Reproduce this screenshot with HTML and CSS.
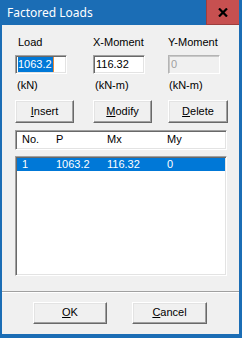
FILE: index.html
```html
<!DOCTYPE html>
<html lang="en">
<head>
    <meta charset="UTF-8">
    <title>Factored Loads</title>
    <link rel="stylesheet" href="styles.css">
</head>
<body>
    <div class="window">
        <div class="titlebar">
            <span class="title">Factored Loads</span>
            <span class="close-btn">
                <svg width="10" height="9" viewBox="0 0 10 9">
                    <path d="M1 0.5 L9 8.5 M9 0.5 L1 8.5" stroke="#000" stroke-width="2.2"/>
                </svg>
            </span>
        </div>
        <div class="client">
            <div class="fields">
                <div class="row labels">
                    <span class="label first">Load</span>
                    <span class="label">X-Moment</span>
                    <span class="label">Y-Moment</span>
                </div>
                <div class="row inputs">
                    <div class="field"><span class="selected">1063.2</span></div>
                    <div class="field">116.32</div>
                    <div class="field disabled">0</div>
                </div>
                <div class="row units">
                    <span class="unit">(kN)</span>
                    <span class="unit">(kN-m)</span>
                    <span class="unit last">(kN-m)</span>
                </div>
                <div class="row actions">
                    <div class="btn w59"><u>I</u>nsert</div>
                    <div class="btn w59"><u>M</u>odify</div>
                    <div class="btn w60"><u>D</u>elete</div>
                </div>
            </div>

            <div class="table-head">
                <div class="cols">
                    <span>No.</span>
                    <span>P</span>
                    <span>Mx</span>
                    <span>My</span>
                </div>
            </div>

            <div class="listbox">
                <div class="cols item active">
                    <span>1</span>
                    <span>1063.2</span>
                    <span>116.32</span>
                    <span>0</span>
                </div>
            </div>

            <div class="separator"></div>

            <div class="footer">
                <div class="btn ok"><u>O</u>K</div>
                <div class="btn cancel"><u>C</u>ancel</div>
            </div>
        </div>
    </div>
</body>
</html>
```

FILE: styles.css
```css
body {
    margin: 0;
    padding: 0;
    font-family: "Liberation Sans", Arial, sans-serif;
    font-size: 11px;
    color: #000;
}

.window {
    width: 242px;
    height: 338px;
    background-color: #1b6db5;
    display: flex;
    flex-direction: column;
}

.titlebar {
    height: 25px;
    display: flex;
    align-items: stretch;
    padding-right: 3px;
}

.title {
    font-family: "Noto Sans", sans-serif;
    font-size: 12px;
    color: #fff;
    padding-left: 7px;
    line-height: 25px;
    flex: 1;
}

.close-btn {
    width: 32px;
    background-color: #c75050;
    border-left: 1px solid #9c3e3e;
    border-bottom: 1px solid #9c3e3e;
    display: flex;
    align-items: center;
    justify-content: center;
}

.client {
    flex: 1;
    margin: 0 3px 4px 2px;
    background-color: #f0f0f0;
    display: flex;
    flex-direction: column;
}

.fields {
    padding: 11px 0 0 13px;
}

.row {
    display: grid;
    grid-template-columns: 78px 75px 60px;
}

.label {
    line-height: 13px;
    height: 13px;
}

.label.first {
    padding-left: 3px;
}

.inputs {
    margin-top: 6px;
}

.field {
    box-sizing: border-box;
    width: 52px;
    height: 19px;
    background: #fff;
    border: 1px solid;
    border-color: #a0a0a0 #fff #fff #a0a0a0;
    box-shadow: inset 1px 1px 0 #696969, inset -1px -1px 0 #e3e3e3;
    padding: 1px 0 0 2px;
    line-height: 15px;
}

.field.disabled {
    background: #f0f0f0;
    color: #a0a0a0;
    border-color: #b4b4b4 #fff #fff #b4b4b4;
    box-shadow: inset 1px 1px 0 #c8c8c8, inset -1px -1px 0 #f0f0f0;
}

.selected {
    display: inline-block;
    background-color: #0078d7;
    color: #fff;
    padding-right: 1px;
    border-right: 1px solid #e88a3a;
}

.units {
    margin-top: 5px;
    line-height: 13px;
}

.unit {
    padding-left: 2px;
}

.unit.last {
    padding-left: 1px;
}

.actions {
    margin-top: 8px;
}

.btn {
    box-sizing: border-box;
    height: 23px;
    background-color: #f0f0f0;
    border: 1px solid;
    border-color: #fff #696969 #696969 #fff;
    box-shadow: inset -1px -1px 0 #a0a0a0, inset 1px 1px 0 #e3e3e3;
    text-align: center;
    line-height: 20px;
}

.w59 {
    width: 59px;
}

.w60 {
    width: 60px;
}

.table-head,
.listbox {
    box-sizing: border-box;
    width: 212px;
    margin-left: 13px;
    background: #fff;
    border: 1px solid;
    border-color: #a0a0a0 #fff #fff #a0a0a0;
    box-shadow: inset 1px 1px 0 #696969, inset -1px -1px 0 #e3e3e3;
    padding: 1px 1px 1px 1px;
}

.table-head {
    margin-top: 7px;
    height: 20px;
}

.table-head .cols {
    padding-top: 1px;
}

.listbox {
    margin-top: 6px;
    height: 120px;
}

.cols {
    display: grid;
    grid-template-columns: 34px 51px 60px auto;
    padding-left: 5px;
    line-height: 13px;
}

.item.active {
    background-color: #0078d7;
    color: #fff;
}

.separator {
    margin-top: 15px;
    height: 1px;
    background-color: #a0a0a0;
    border-bottom: 1px solid #fff;
}

.footer {
    margin-top: 9px;
    padding-left: 31px;
    display: flex;
    gap: 25px;
}

.footer .btn {
    height: 22px;
    line-height: 19px;
}

.ok {
    width: 74px;
}

.cancel {
    width: 75px;
}
```
